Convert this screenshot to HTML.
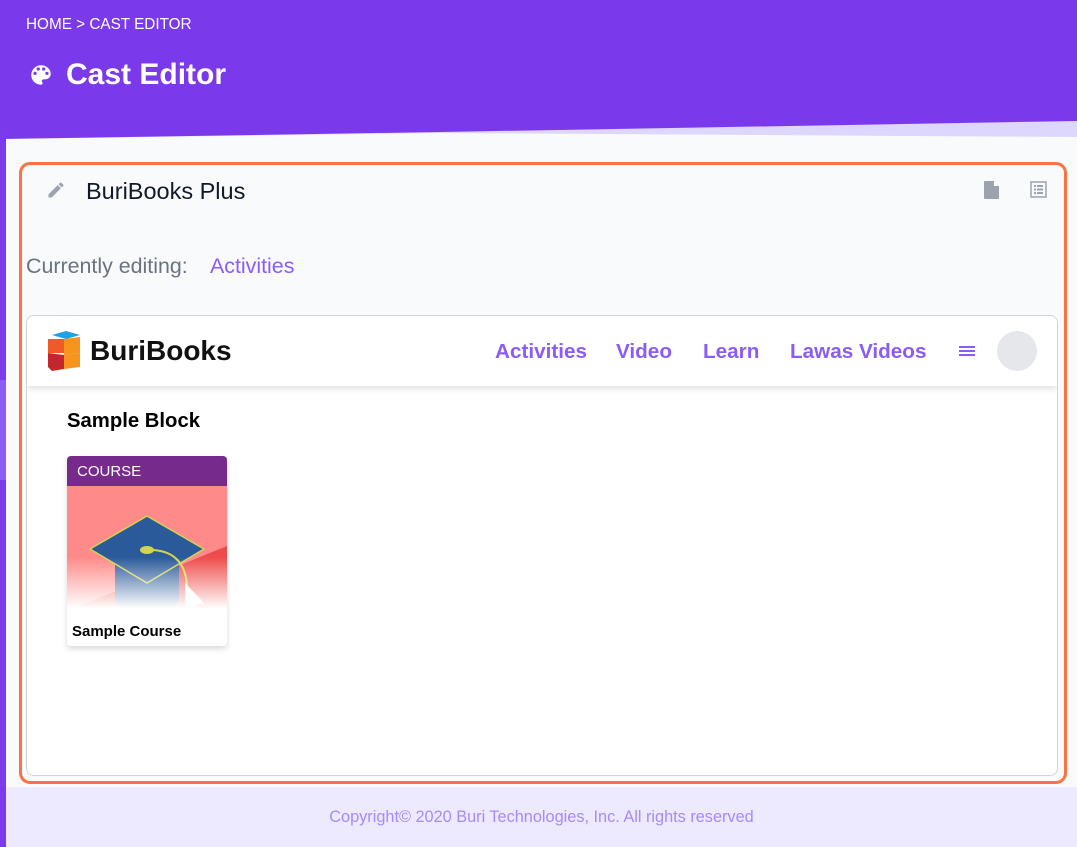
<!DOCTYPE html>
<html><head><meta charset="utf-8"><style>
*{margin:0;padding:0;box-sizing:border-box}
body{width:1077px;height:847px;position:relative;overflow:hidden;background:#f8fafc;font-family:"Liberation Sans",sans-serif}
.abs{position:absolute}
</style></head><body>
<svg class="abs" style="left:0;top:0" width="1077" height="847">
<rect x="0" y="0" width="1077" height="847" fill="#f8fafc"/>
<polygon points="0,0 1077,0 1077,137 440,133 0,139" fill="#ddd6fe"/>
<polygon points="0,0 1077,0 1077,121 440,132 0,139" fill="#7a3aeb"/>
<rect x="0" y="130" width="6" height="717" fill="#7c3aed"/>
<rect x="0" y="380" width="6" height="100" fill="#8b5cf6"/>
<rect x="6" y="787" width="1071" height="60" fill="#ede9fe"/>
</svg>
<div class="abs" style="left:26px;top:16px;color:#fff;font-size:15.3px">HOME &gt; CAST EDITOR</div>
<svg class="abs" style="left:28px;top:62px" width="26" height="26" viewBox="0 0 24 24"><path fill="#fff" d="M12 3a9 9 0 0 0 0 18c.83 0 1.5-.67 1.5-1.5 0-.39-.15-.74-.39-1.01-.23-.26-.38-.61-.38-.99 0-.83.67-1.5 1.5-1.5H16c2.76 0 5-2.24 5-5 0-4.42-4.03-8-9-8zm-5.5 9a1.5 1.5 0 1 1 0-3 1.5 1.5 0 0 1 0 3zm3-4a1.5 1.5 0 1 1 0-3 1.5 1.5 0 0 1 0 3zm5 0a1.5 1.5 0 1 1 0-3 1.5 1.5 0 0 1 0 3zm3 4a1.5 1.5 0 1 1 0-3 1.5 1.5 0 0 1 0 3z"/></svg>
<div class="abs" style="left:66px;top:58px;color:#fff;font-size:30px;font-weight:bold">Cast Editor</div>

<div class="abs" style="left:19px;top:162px;width:1048px;height:622px;border:3px solid #ff7043;border-radius:11px"></div>
<svg class="abs" style="left:46px;top:180px" width="20" height="20" viewBox="0 0 24 24"><path fill="#9ca3af" d="M3 17.25V21h3.75L17.81 9.94l-3.75-3.75L3 17.25zM20.71 7.04a1 1 0 0 0 0-1.41l-2.34-2.34a1 1 0 0 0-1.41 0l-1.83 1.83 3.75 3.75 1.83-1.83z"/></svg>
<div class="abs" style="left:86px;top:178px;font-size:23.5px;color:#111827">BuriBooks Plus</div>
<svg class="abs" style="left:983px;top:180px" width="18" height="20" viewBox="0 0 18 20"><path fill="#9ca3af" d="M2 1h9l5 5v12a1 1 0 0 1-1 1H2a1 1 0 0 1-1-1V2a1 1 0 0 1 1-1z"/><path fill="#fff" d="M11 1v5h5z"/></svg>
<svg class="abs" style="left:1030px;top:181px" width="17" height="17" viewBox="0 0 17 17"><rect x="1" y="1" width="15" height="15" fill="none" stroke="#9ca3af" stroke-width="1.5"/><g fill="#9ca3af"><rect x="4" y="4" width="2" height="2"/><rect x="7" y="4" width="6" height="2"/><rect x="4" y="7.5" width="2" height="2"/><rect x="7" y="7.5" width="6" height="2"/><rect x="4" y="11" width="2" height="2"/><rect x="7" y="11" width="6" height="2"/></g></svg>
<div class="abs" style="left:26px;top:254px;font-size:21.4px;color:#6b7280">Currently editing:</div>
<div class="abs" style="left:210px;top:254px;font-size:21.4px;color:#8b5cf6">Activities</div>

<div class="abs" style="left:26px;top:315px;width:1032px;height:461px;background:#fff;border:1px solid #d1d5db;border-radius:8px;overflow:hidden">
 <div style="position:absolute;left:0;top:0;width:100%;height:70px;background:#fff;box-shadow:0 3px 6px rgba(0,0,0,.12)"></div>
</div>
<svg class="abs" style="left:46px;top:331px" width="38" height="40" viewBox="0 0 38 40"><polygon points="6,4 20,0 34,4 20,8" fill="#1ea0e6"/><polygon points="2,8 18,8 18,22 2,22" fill="#f05a28"/><polygon points="18,8 34,6 34,22 18,24" fill="#f7941d"/><polygon points="2,22 18,24 18,38 6,40 2,36" fill="#c1272d"/><polygon points="18,24 34,22 34,36 18,38" fill="#f7941d"/></svg>
<div class="abs" style="left:90px;top:335px;font-size:28px;font-weight:bold;color:#111">BuriBooks</div>
<div class="abs" style="left:495px;top:340px;font-size:20.7px;font-weight:bold;color:#8b5cf6">Activities</div>
<div class="abs" style="left:616px;top:340px;font-size:20.7px;font-weight:bold;color:#8b5cf6">Video</div>
<div class="abs" style="left:703px;top:340px;font-size:20.7px;font-weight:bold;color:#8b5cf6">Learn</div>
<div class="abs" style="left:790px;top:340px;font-size:20.7px;font-weight:bold;color:#8b5cf6">Lawas Videos</div>
<svg class="abs" style="left:959px;top:345px" width="16" height="12"><g fill="#8b5cf6"><rect y="1" width="16" height="2"/><rect y="5" width="16" height="2"/><rect y="9" width="16" height="2"/></g></svg>
<div class="abs" style="left:997px;top:331px;width:40px;height:40px;border-radius:50%;background:#e5e7eb"></div>

<div class="abs" style="left:67px;top:410px;font-size:20.3px;font-weight:bold;color:#000">Sample Block</div>
<div class="abs" style="left:67px;top:456px;width:160px;height:190px;border-radius:4px;overflow:hidden;background:#fff;box-shadow:0 3px 6px rgba(0,0,0,.15)">
 <div style="height:30px;background:#762b8c;color:#fff;font-size:15px;padding:7px 10px">COURSE</div>
 <svg width="160" height="129" viewBox="0 0 160 129" style="display:block">
  <defs><linearGradient id="f" x1="0" y1="0" x2="0" y2="1"><stop offset="0.55" stop-color="#fff" stop-opacity="0"/><stop offset="0.95" stop-color="#fff" stop-opacity="1"/></linearGradient></defs>
  <rect width="160" height="129" fill="#ff8a8a"/>
  <polygon points="0,125 160,60 160,129 0,129" fill="#ee4c4c"/>
  <rect x="48" y="70" width="64" height="50" rx="8" fill="#2a5a9a"/>
  <polygon points="80,30 137,63 80,97 23,63" fill="#2a5a9a" stroke="#d4d44a" stroke-width="1.5" stroke-linejoin="round"/>
  <ellipse cx="80" cy="64" rx="7" ry="4" fill="#d4d44a"/>
  <path d="M86 64 Q118 66 120 100" fill="none" stroke="#d4d44a" stroke-width="2"/>
  <rect width="160" height="129" fill="url(#f)"/>
  <polygon points="118,97 138,118 128,118 134,129 126,129 120,119 118,122" fill="#fff"/>
 </svg>
 <div style="font-size:15px;font-weight:bold;color:#000;padding:8px 5px">Sample Course</div>
</div>

<div class="abs" style="left:0;top:808px;width:1083px;text-align:center;font-size:16.3px;color:#a78bfa">Copyright© 2020 Buri Technologies, Inc. All rights reserved</div>
</body></html>
